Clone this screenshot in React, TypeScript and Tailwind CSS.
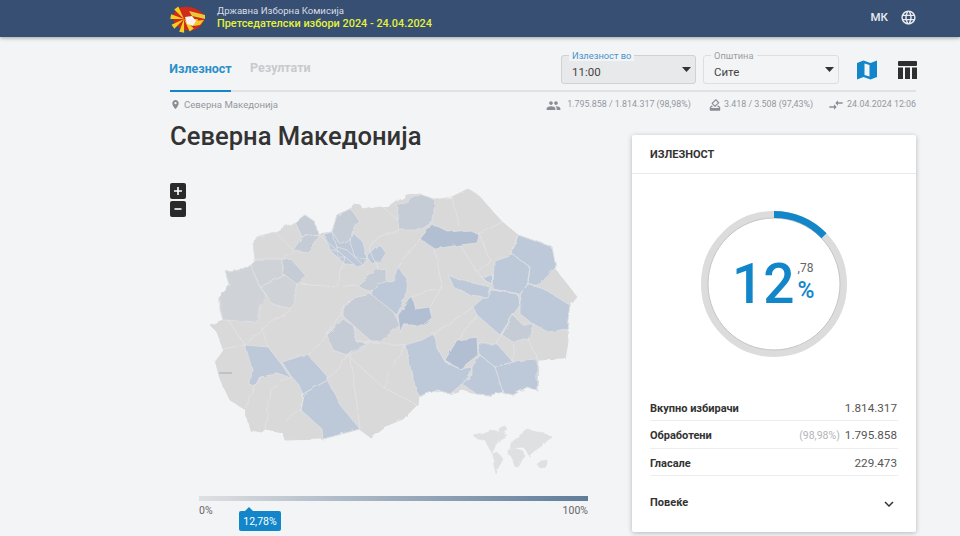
import { MdExpandMore, MdLanguage, MdPeople, MdPlace, MdCompareArrows, MdHowToVote } from "react-icons/md";

const font = { fontFamily: "Roboto, 'Noto Sans', sans-serif" };

const Logo = () => {
  const rays = [100, 145, 190, 235, 280, 325];
  return (
    <svg width="38" height="30" viewBox="0 0 38 30" className="shrink-0">
      <path d="M3 14 C3 7 8 3 14 3 C20 2 30 5 35 12 C35 18 30 24 24 26 C16 28 4 24 3 14 Z" fill="#cf2a1c" />
      {rays.map((r) => (
        <path key={r} d="M14 15 L11.5 1.5 L16.5 1.5 Z" fill="#f4cf1e" transform={`rotate(${r} 14 15)`} />
      ))}
      <path d="M19 7 L35 11 L35 15 L22 12 Z" fill="#e9c93a" />
      <path d="M22 17 L34 16 L30 21 L24 22 Z" fill="#f1c928" />
      <path d="M15 13 L22 12 L26 17 L23 22 L17 20 Z" fill="#f6f3ec" />
    </svg>
  );
};

const Header = () => (
  <header className="relative z-10 flex h-[37px] items-center justify-between bg-[#364f72] pl-[170px] pr-[43px] shadow-[0_1px_4px_rgba(0,0,0,0.35)]">
    <div className="flex items-center">
      <Logo />
      <div className="ml-[9px] mt-[-3px] leading-[13px]">
        <div className="text-[9.6px] text-[#d9dee5]">Државна Изборна Комисија</div>
        <div className="text-[10.9px] font-medium text-[#e6f23c]">Претседателски избори 2024 - 24.04.2024</div>
      </div>
    </div>
    <div className="mt-[-2px] flex items-center text-[#e8ebef]">
      <span className="text-[11.5px] font-medium">МК</span>
      <MdLanguage className="ml-[12px] text-[17px]" />
    </div>
  </header>
);

const SelectBox = ({ label, value, active, width }: { label: string; value: string; active?: boolean; width: string }) => (
  <div
    className={`relative flex h-[29px] ${width} items-center justify-between rounded-[3px] border pl-[10px] pr-[4px] text-[11.5px] text-[#444] ${
      active ? "border-[#cfd1d4] bg-[#e8e9eb]" : "border-[#dcdee1] bg-[#f3f4f6]"
    }`}
  >
    <span
      className={`absolute left-[7px] top-[-6px] bg-[#f3f4f6] px-[3px] text-[9.3px] leading-[11px] ${
        active ? "text-[#4a93c9]" : "text-[#9a9ea3]"
      }`}
    >
      {label}
    </span>
    <span className="mt-[6px]">{value}</span>
    <svg width="9" height="5" viewBox="0 0 9 5">
      <path d="M0 0 H9 L4.5 5 Z" fill="#333" />
    </svg>
  </div>
);

const Toolbar = () => (
  <div className="flex h-[55px] items-center justify-between border-b-2 border-[#dfe1e4]">
    <div className="flex h-full items-end text-[12.5px] font-bold">
      <span className="mb-[-2px] flex h-[55px] w-[61px] items-center justify-center border-b-2 border-[#1286c9] pt-[12px] text-[#2b8fc9]">Излезност</span>
      <span className="ml-[19px] flex h-[55px] items-center pt-[12px] text-[#c8cacd]">Резултати</span>
    </div>
    <div className="flex items-center pt-[12px]">
      <SelectBox label="Излезност во" value="11:00" active width="w-[135px]" />
      <div className="w-[7px]" />
      <SelectBox label="Општина" value="Сите" width="w-[136px]" />
      <svg width="20" height="20" viewBox="0 0 20 20" className="ml-[18px]">
        <path d="M0 3 L6.5 0.5 L13.5 3 L20 0.5 V17 L13.5 19.5 L6.5 17 L0 19.5 Z" fill="#1286c9" />
        <path d="M7.5 3.5 L12.5 5 V16.5 L7.5 15 Z" fill="#f3f4f6" />
      </svg>
      <svg width="19" height="18" viewBox="0 0 19 18" className="ml-[21px] mr-[-1px]">
        <rect x="0" y="0" width="19" height="5" rx="1" fill="#2f2f2f" />
        <rect x="0" y="6.5" width="5" height="11.5" fill="#2f2f2f" />
        <rect x="7" y="6.5" width="5" height="11.5" fill="#2f2f2f" />
        <rect x="14" y="6.5" width="5" height="11.5" fill="#2f2f2f" />
      </svg>
    </div>
  </div>
);

const InfoRow = () => (
  <div className="flex h-[26px] items-center justify-between text-[#94989e]">
    <div className="flex items-center text-[9.6px]">
      <MdPlace className="text-[11px] text-[#8a8e94]" />
      <span className="ml-[3px]">Северна Македонија</span>
    </div>
    <div className="flex items-center text-[8.9px]">
      <MdPeople className="text-[15px] text-[#8a8e94]" />
      <span className="ml-[6px]">1.795.858 / 1.814.317 (98,98%)</span>
      <MdHowToVote className="ml-[17px] text-[14px] text-[#8a8e94]" />
      <span className="ml-[2px]">3.418 / 3.508 (97,43%)</span>
      <MdCompareArrows className="ml-[15px] text-[16px] text-[#8a8e94]" />
      <span className="ml-[3px]">24.04.2024 12:06</span>
    </div>
  </div>
);

const G = "#d9d9d9";
const L = "#cfd2d6";
const M = "#c6ccd6";
const B = "#bdc8d8";
const D = "#b2bed1";

const outline =
  "226,270 240,269 250,262 255,257 253,242 257,235 275,230 295,220 305,213 315,220 318,232 332,230 337,213 350,207 352,202 360,203 363,208 380,205 385,207 390,205 400,198 408,194 420,192 435,198 452,195 468,187 480,195 502,220 518,233 552,245 555,267 577,295 567,307 567,327 568,340 565,357 538,358 537,388 527,385 513,393 502,390 490,393 477,392 462,387 450,392 438,388 423,393 418,393 417,403 403,417 383,425 370,435 359,427 323,437 285,438 283,430 265,427 262,430 250,428 245,407 230,398 220,377 215,358 223,347 217,330 210,323 223,318 220,307 220,295 230,283";

const regions: [string, string][] = [
  // west
  ["226,270 240,269 250,262 260,285 267,295 260,303 257,320 223,318 220,307 220,295 230,283", L],
  ["260,285 285,273 297,280 292,307 272,302 267,293", L],
  ["255,257 282,257 282,272 285,273 260,285 250,262", L],
  ["253,242 257,235 275,230 293,248 282,257 255,257", G],
  ["275,230 295,220 302,235 293,248", G],
  ["295,220 305,213 315,220 318,232 302,235", M],
  ["302,235 318,232 315,242 307,250 293,248", M],
  ["282,257 292,258 307,275 297,282 285,273 282,272", M],
  // north cluster
  ["332,230 350,237 352,230 363,240 367,257 363,263 345,262 337,255 330,248 325,232", B],
  ["332,230 337,213 350,207 355,212 360,220 352,225 350,237 340,242", M],
  ["325,232 332,230 338,248 330,248", B],
  ["352,230 363,240 367,257 355,255 350,240", B],
  ["337,245 347,248 363,263 357,265 345,255 337,255", B],
  ["367,255 380,243 385,250 380,258 372,262", B],
  ["357,283 378,267 387,268 387,287 370,290", M],
  // central
  ["342,313 350,297 370,292 380,297 393,310 400,323 380,340 372,340 352,322", M],
  ["327,333 343,317 352,322 357,340 370,342 347,353 333,348", M],
  ["372,293 377,282 393,278 398,265 407,277 405,295 397,313", B],
  ["398,313 412,295 415,307 430,305 433,317 425,323 403,323 400,330", D],
  // north east
  ["398,203 422,192 435,198 433,220 420,228 400,228 397,217", M],
  ["420,237 432,222 448,230 470,228 479,233 477,241 460,243 435,247", D],
  ["518,233 552,245 556,265 540,282 528,282 530,265 512,252", B],
  ["494,258 512,252 530,265 527,283 520,292 493,287", B],
  ["520,293 528,282 540,285 570,303 567,327 548,330 530,320 520,312", B],
  ["473,305 492,288 517,292 520,303 513,313 500,333 493,327 477,313", B],
  ["448,273 460,278 490,285 487,295 470,293 453,285", B],
  ["482,277 492,272 493,283", B],
  ["502,333 513,313 523,323 535,323 528,337 515,341", M],
  // south east
  ["405,343 422,338 433,332 438,347 445,360 460,367 472,365 470,373 462,382 450,392 438,388 423,393 418,393 413,377", B],
  ["445,358 457,338 477,335 478,353 460,367", D],
  ["462,382 472,373 472,365 480,353 495,365 503,382 503,390 490,393 477,392", B],
  ["478,342 497,342 513,360 495,365 480,353", B],
  ["495,365 513,360 537,358 537,388 527,385 513,393 503,390", B],
  // south
  ["245,343 268,345 282,363 290,375 277,372 260,375 255,385 250,383 252,367", B],
  ["282,360 307,352 328,375 328,378 303,392 298,382 290,373", B],
  ["328,378 340,403 360,427 323,437 322,427 300,407 303,392", B],
];

const borders = [
  "M245 343 L223 347 M228 318 L245 343 L262 327 L292 307 M262 327 L268 345 M307 352 L327 333",
  "M260 375 L245 407 M290 375 L270 388 L265 427 M303 392 L300 407 L285 418",
  "M328 378 L350 350 L372 340 M350 350 L360 427 M347 353 L383 385 L417 403 M383 385 L405 343 M357 340 L405 343",
  "M318 232 L345 255 L337 285 L357 283 M337 285 L300 282 M350 297 L327 333 M378 267 L370 247 M385 207 L397 217 M378 235 L400 228 M378 235 L370 247",
  "M398 265 L410 250 L420 237 M435 247 L442 285 L430 305 M412 295 L442 285 M435 198 L452 195 L460 225 M502 220 L480 232 L490 258 L477 270 M460 243 L477 270 L487 280 M518 233 L510 252",
  "M433 332 L473 305 M457 338 L477 313 M497 342 L502 333 M528 337 L538 358 M515 341 L513 360",
];

const world = [
  "473,433 482,431 490,428 497,430 507,433 500,437 497,441 496,446 493,452 488,444 484,437 476,436",
  "499,427 506,425 508,428 502,433",
  "493,453 498,451 503,457 501,461 498,466 496,472 494,464",
  "508,448 515,447 524,450 525,454 522,458 519,464 516,466 514,460 511,454 508,452",
  "512,438 520,433 528,428 538,430 552,434 547,437 543,441 540,447 535,450 530,455 527,449 523,445 517,446 510,447 511,442",
  "537,462 541,459 547,458 547,465 540,466",
];

const MapView = () => (
  <div className="relative mt-[18px] h-[325px]">
    <svg width="462" height="325" viewBox="170 168 462 325" className="block">
      <defs>
        <filter id="rough" x="-5%" y="-5%" width="110%" height="110%">
          <feTurbulence type="fractalNoise" baseFrequency="0.09" numOctaves="2" seed="4" result="n" />
          <feDisplacementMap in="SourceGraphic" in2="n" scale="4.5" />
          <feGaussianBlur stdDeviation="0.35" />
        </filter>
      </defs>
      <g filter="url(#rough)">
        <polygon points={outline} fill={G} stroke={G} strokeLinejoin="round" strokeWidth="1" />
        {regions.map(([p, c], i) => (
          <polygon key={i} points={p} fill={c} stroke="#dfe2e6" strokeWidth="0.8" strokeLinejoin="round" />
        ))}
        {borders.map((d, i) => (
          <path key={i} d={d} fill="none" stroke="#e4e5e7" strokeWidth="0.8" />
        ))}
        {world.map((p, i) => (
          <polygon key={i} points={p} fill="#dfe0e1" strokeLinejoin="round" stroke="#dfe0e1" strokeWidth="0.6" />
        ))}
      </g>
      <path d="M219 371 H232" stroke="#b4b9c1" strokeWidth="1.4" />
    </svg>
    <div className="absolute left-0 top-[13px] flex flex-col gap-[2px]">
      <div className="flex h-[16px] w-[16px] items-center justify-center rounded-[2px] bg-[#2a2a2a]">
        <svg width="10" height="10" viewBox="0 0 10 10"><path d="M5 1 V9 M1 5 H9" stroke="#fff" strokeWidth="1.6" /></svg>
      </div>
      <div className="flex h-[16px] w-[16px] items-center justify-center rounded-[2px] bg-[#2a2a2a]">
        <svg width="10" height="10" viewBox="0 0 10 10"><path d="M1.5 5 H8.5" stroke="#fff" strokeWidth="1.6" /></svg>
      </div>
    </div>
  </div>
);

const Legend = () => (
  <div className="ml-[29px] mt-[1px] w-[389px]">
    <div className="h-[5px] bg-gradient-to-r from-[#dfe0e2] to-[#5f7c99]" />
    <div className="relative mt-[3px] flex justify-between text-[10.5px] leading-[13px] text-[#666]">
      <span>0%</span>
      <span>100%</span>
      <div className="absolute left-[40px] top-[7px] flex h-[20px] w-[42px] items-center justify-center rounded-[2px] bg-[#1286c9] text-[10.5px] text-white">
        12,78%
        <span className="absolute left-[6px] top-[-4px] h-0 w-0 border-x-[4px] border-b-[4px] border-x-transparent border-b-[#1286c9]" />
      </div>
    </div>
  </div>
);

const Row = ({ label, value, note }: { label: string; value: string; note?: string }) => (
  <div className="flex h-[27.5px] items-center justify-between border-b border-[#eceded] pr-[1px] pt-[4px]">
    <span className="text-[11px] font-bold text-[#333]">{label}</span>
    <span className="text-[11.7px] text-[#555]">
      {note && <span className="mr-[5px] text-[10.5px] text-[#b3b5b8]">{note}</span>}
      {value}
    </span>
  </div>
);

const Gauge = () => {
  const r = 69.5;
  const c = 2 * Math.PI * r;
  return (
    <div className="relative mx-auto h-[148px] w-[148px]">
      <svg width="148" height="148" viewBox="0 0 148 148" className="block">
        <circle cx="74" cy="74" r={r} fill="#fff" stroke="#dcdcdc" strokeWidth="7" />
        <circle cx="74" cy="74" r="66" fill="none" stroke="#c4c4c4" strokeWidth="1" />
        <circle
          cx="74"
          cy="74"
          r={r}
          fill="none"
          stroke="#1286c9"
          strokeWidth="7"
          strokeDasharray={`${c * 0.1278} ${c}`}
          transform="rotate(-90 74 74)"
        />
      </svg>
      <div className="absolute left-[32px] top-[41px] flex items-start">
        <span className="text-[55px] font-medium leading-[66px] text-[#1286c9]">12</span>
        <div className="ml-[3px] mt-[10px] flex flex-col">
          <span className="text-[12px] leading-[15px] text-[#666]">,78</span>
          <span className="mt-[2px] text-[23px] font-medium leading-[26px] text-[#1286c9]">%</span>
        </div>
      </div>
    </div>
  );
};

const Card = () => (
  <aside className="mt-[15px] h-[397px] w-[284px] rounded-[2px] bg-white shadow-[0_1px_5px_rgba(0,0,0,0.25)]">
    <div className="flex h-[39px] items-center border-b border-[#e9eaeb] px-[18px] pt-[3px] text-[11px] font-bold text-[#333]">ИЗЛЕЗНОСТ</div>
    <div className="pt-[36px]">
      <Gauge />
    </div>
    <div className="mx-[18px] mt-[35.5px]">
      <Row label="Вкупно избирачи" value="1.814.317" />
      <Row label="Обработени" note="(98,98%)" value="1.795.858" />
      <Row label="Гласале" value="229.473" />
      <div className="mt-[18.5px] flex items-center justify-between text-[11px] font-bold text-[#333]">
        <span>Повеќе</span>
        <MdExpandMore className="text-[18px] text-[#333]" />
      </div>
    </div>
  </aside>
);

export default function App() {
  return (
    <div className="h-[536px] w-[960px] overflow-hidden bg-[#f3f4f6]" style={font}>
      <Header />
      <main className="ml-[170px] w-[746px]">
        <Toolbar />
        <InfoRow />
        <div className="flex justify-between pt-[2px]">
          <div className="w-[462px]">
            <h1 className="text-[25.6px] font-medium leading-[32px] text-[#333]">Северна Македонија</h1>
            <MapView />
            <Legend />
          </div>
          <Card />
        </div>
      </main>
    </div>
  );
}
